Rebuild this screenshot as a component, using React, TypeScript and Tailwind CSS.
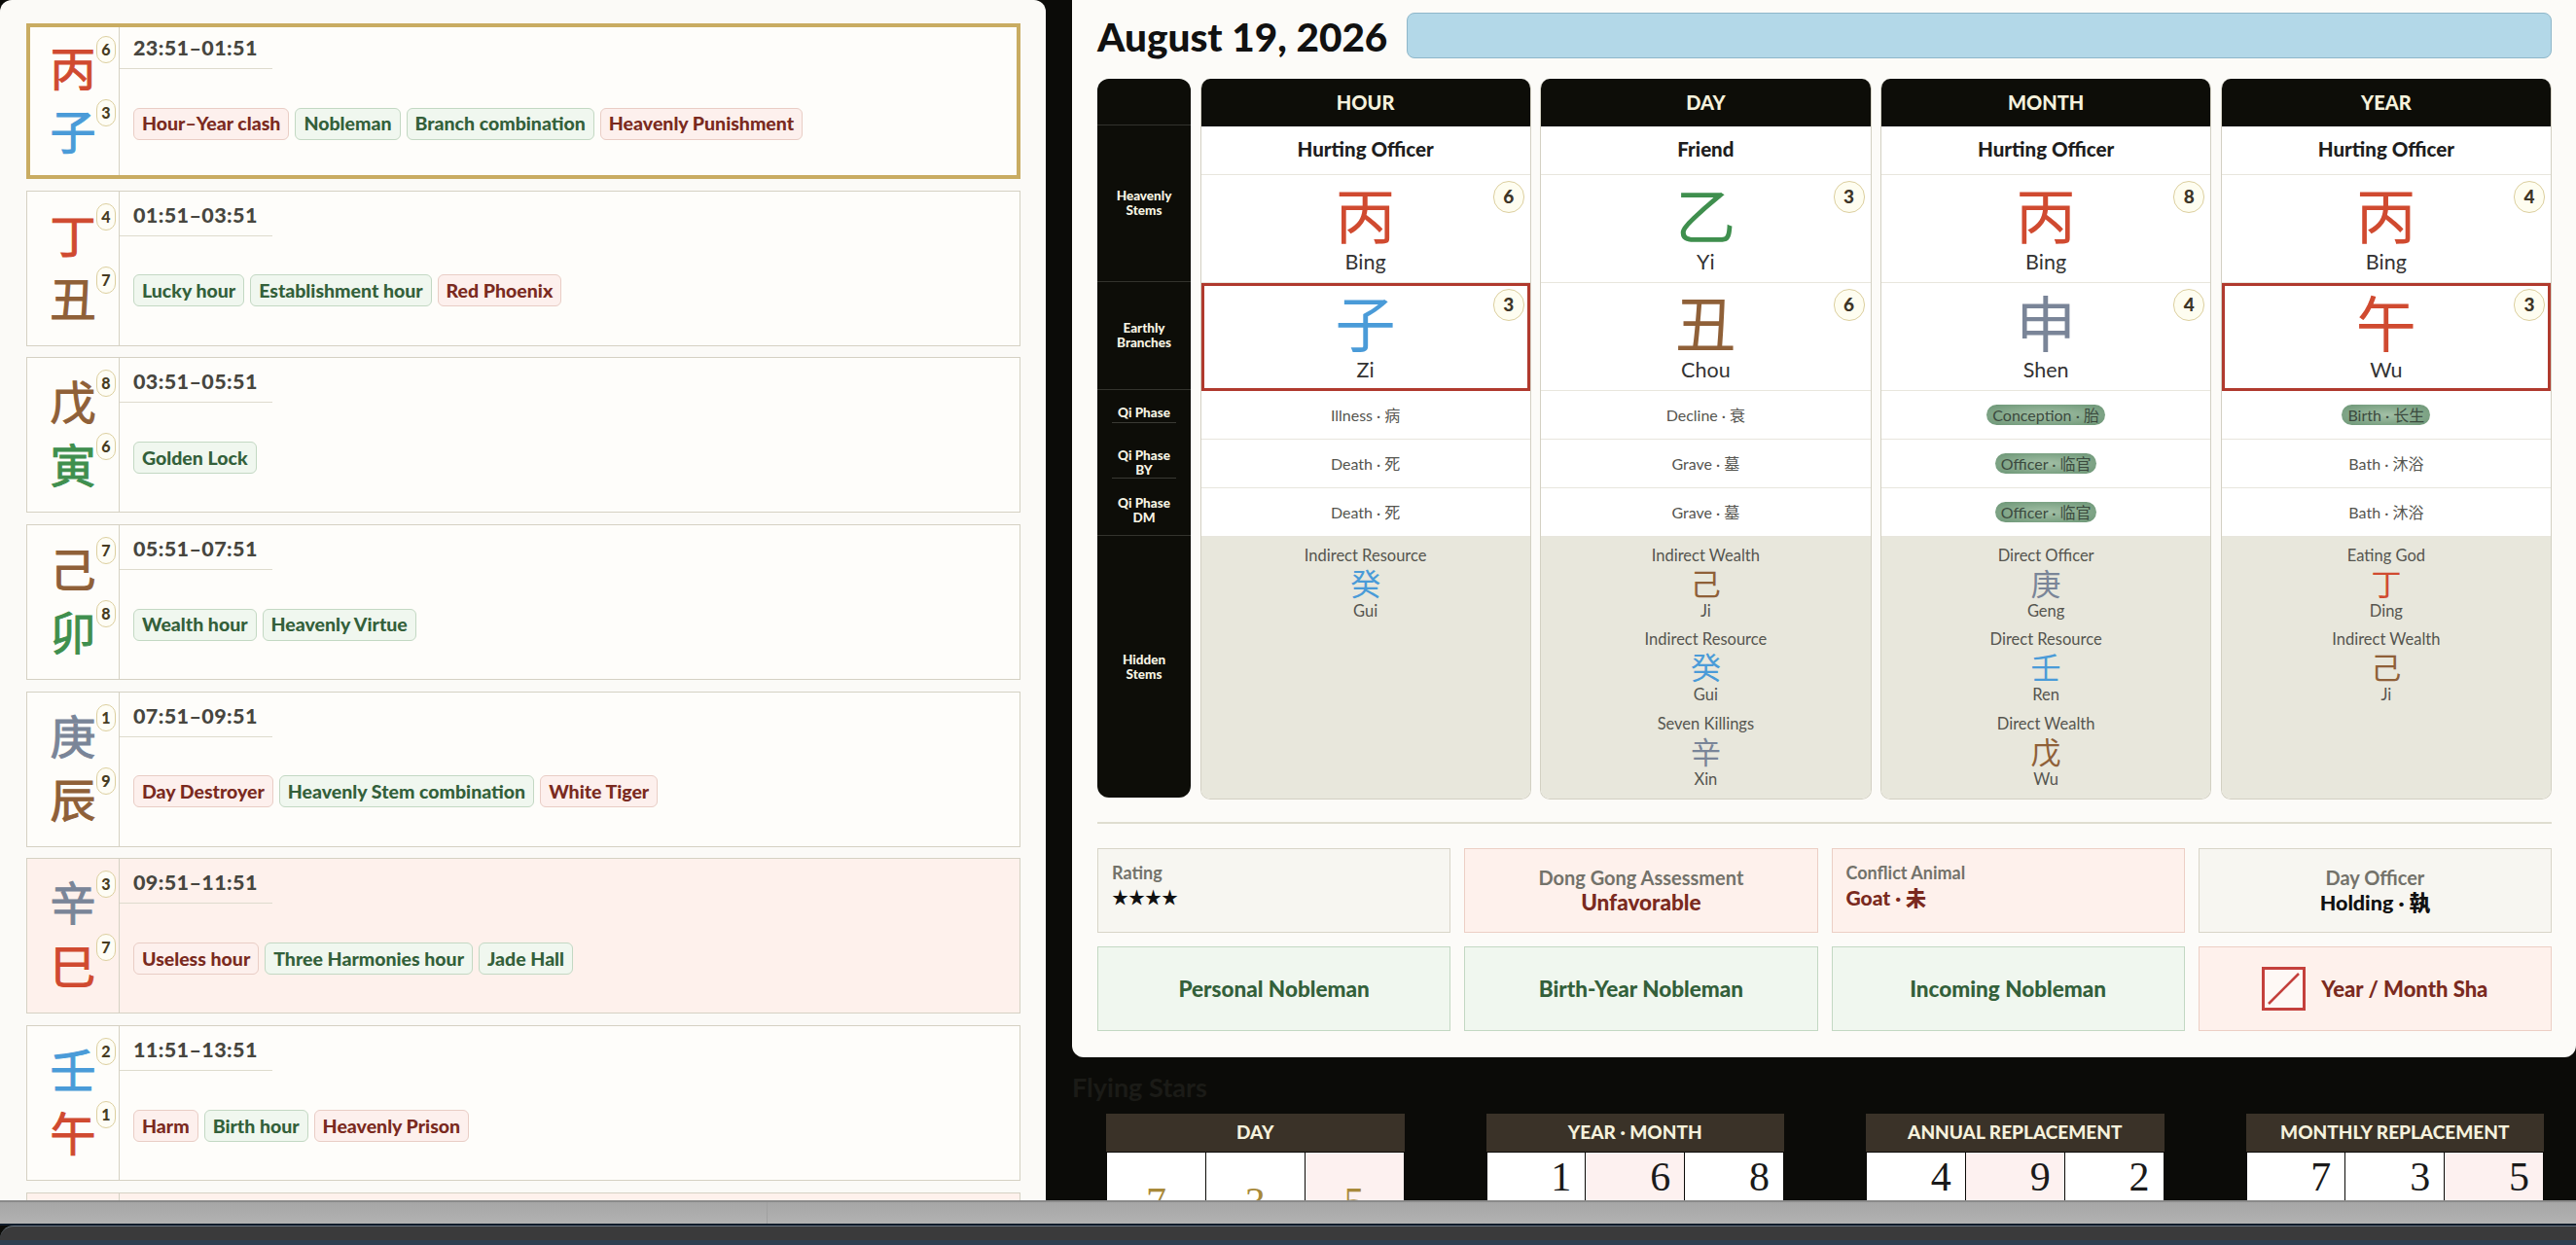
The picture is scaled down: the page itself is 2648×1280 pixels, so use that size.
import React from "react";

const RED = "text-[#d04a30]";
const BLUE = "text-[#4a9bd8]";
const BROWN = "text-[#8f6038]";
const GREEN = "text-[#3f8f4e]";
const GRAY = "text-[#7a8598]";

type Tag = [string, "r" | "g"];
type Hour = { a: [string, string, number]; b: [string, string, number]; time: string; tags: Tag[]; sel?: boolean; warm?: boolean };

const hours: Hour[] = [
  { a: ["丙", RED, 6], b: ["子", BLUE, 3], time: "23:51–01:51", sel: true, tags: [["Hour–Year clash", "r"], ["Nobleman", "g"], ["Branch combination", "g"], ["Heavenly Punishment", "r"]] },
  { a: ["丁", RED, 4], b: ["丑", BROWN, 7], time: "01:51–03:51", tags: [["Lucky hour", "g"], ["Establishment hour", "g"], ["Red Phoenix", "r"]] },
  { a: ["戊", BROWN, 8], b: ["寅", GREEN, 6], time: "03:51–05:51", tags: [["Golden Lock", "g"]] },
  { a: ["己", BROWN, 7], b: ["卯", GREEN, 8], time: "05:51–07:51", tags: [["Wealth hour", "g"], ["Heavenly Virtue", "g"]] },
  { a: ["庚", GRAY, 1], b: ["辰", BROWN, 9], time: "07:51–09:51", tags: [["Day Destroyer", "r"], ["Heavenly Stem combination", "g"], ["White Tiger", "r"]] },
  { a: ["辛", GRAY, 3], b: ["巳", RED, 7], time: "09:51–11:51", warm: true, tags: [["Useless hour", "r"], ["Three Harmonies hour", "g"], ["Jade Hall", "g"]] },
  { a: ["壬", BLUE, 2], b: ["午", RED, 1], time: "11:51–13:51", tags: [["Harm", "r"], ["Birth hour", "g"], ["Heavenly Prison", "r"]] },
];

function StemCell({ v }: { v: [string, string, number] }) {
  return (
    <div className={`relative h-[65px] flex items-center justify-center text-[47px] leading-none font-normal [-webkit-text-stroke:1px_currentColor] ${v[1]}`}>
      <span className="-mt-[2px]">{v[0]}</span>
      <span className="absolute top-[-2px] right-[3px] w-[20px] h-[28px] rounded-full border border-[#dccf9f] bg-[#fefdf5] flex items-center justify-center text-[16px] font-black text-[#463c22] [-webkit-text-stroke:0]">
        {v[2]}
      </span>
    </div>
  );
}

function HourRow({ h }: { h: Hour }) {
  const bg = h.warm ? "bg-[#fef1ec]" : "bg-[#fefdfa]";
  const ring = h.sel ? "outline-4 -outline-offset-4 outline-[#c9ac62]" : "";
  return (
    <div className={`flex h-[160px] shrink-0 border-[1.5px] border-[#d5d1c3] ${bg} ${ring}`}>
      <div className="w-[95px] shrink-0 border-r-[1.5px] border-[#d5d1c3] flex flex-col justify-center">
        <StemCell v={h.a} />
        <StemCell v={h.b} />
      </div>
      <div className="flex-1 flex flex-col">
        <div className="self-start h-[46px] pl-[14px] pr-[15px] pt-[12px] border-b border-[#dedbcd] text-[21.5px] leading-[24px] tracking-[0.4px] font-black text-[#47463f]">
          {h.time}
        </div>
        <div className="flex-1 flex items-center gap-[6px] pl-[14px]">
          {h.tags.map(([t, k]) => (
            <span
              key={t}
              className={`h-[33px] px-[8px] flex items-center rounded-[6px] border text-[19.5px] font-black ${
                k === "r" ? "bg-[#fdf0ed] border-[#e9cdc5] text-[#7a2a20]" : "bg-[#f0f7ef] border-[#c3d8c3] text-[#33603a]"
              }`}
            >
              {t}
            </span>
          ))}
        </div>
      </div>
    </div>
  );
}

type Hid = [string, string, string, string];
type Pillar = {
  title: string; god: string;
  stem: [string, string, string, number];
  branch: [string, string, string, number];
  hl?: boolean;
  qi: [string, boolean][];
  hidden: Hid[];
};

const pillars: Pillar[] = [
  { title: "HOUR", god: "Hurting Officer", stem: ["丙", RED, "Bing", 6], branch: ["子", BLUE, "Zi", 3], hl: true,
    qi: [["Illness · 病", false], ["Death · 死", false], ["Death · 死", false]],
    hidden: [["Indirect Resource", "癸", BLUE, "Gui"]] },
  { title: "DAY", god: "Friend", stem: ["乙", GREEN, "Yi", 3], branch: ["丑", BROWN, "Chou", 6],
    qi: [["Decline · 衰", false], ["Grave · 墓", false], ["Grave · 墓", false]],
    hidden: [["Indirect Wealth", "己", BROWN, "Ji"], ["Indirect Resource", "癸", BLUE, "Gui"], ["Seven Killings", "辛", GRAY, "Xin"]] },
  { title: "MONTH", god: "Hurting Officer", stem: ["丙", RED, "Bing", 8], branch: ["申", GRAY, "Shen", 4],
    qi: [["Conception · 胎", true], ["Officer · 临官", true], ["Officer · 临官", true]],
    hidden: [["Direct Officer", "庚", GRAY, "Geng"], ["Direct Resource", "壬", BLUE, "Ren"], ["Direct Wealth", "戊", BROWN, "Wu"]] },
  { title: "YEAR", god: "Hurting Officer", stem: ["丙", RED, "Bing", 4], branch: ["午", RED, "Wu", 3], hl: true,
    qi: [["Birth · 长生", true], ["Bath · 沐浴", false], ["Bath · 沐浴", false]],
    hidden: [["Eating God", "丁", RED, "Ding"], ["Indirect Wealth", "己", BROWN, "Ji"]] },
];

function BigCell({ v, hl }: { v: [string, string, string, number]; hl?: boolean }) {
  return (
    <div className={`relative h-[111px] flex flex-col items-center ${hl ? "pt-[5px] border-[3px] border-[#b03a2e]" : "pt-[8px] border-b border-[#e8e6dd]"}`}>
      <span className={`text-[62px] leading-[69px] ${v[1]}`}>{v[0]}</span>
      <span className="text-[21.5px] leading-[24px] text-[#333]">{v[2]}</span>
      <span className={`absolute ${hl ? "top-[3px] right-[3px]" : "top-[6px] right-[6px]"} w-[32px] h-[33px] rounded-full border border-[#dccf9f] bg-[#fefdf0] flex items-center justify-center text-[19px] font-black text-[#3d3527]`}>
        {v[3]}
      </span>
    </div>
  );
}

function PillarCol({ p }: { p: Pillar }) {
  return (
    <div className="flex flex-col rounded-[10px] overflow-hidden border-x-[1.5px] border-b-[1.5px] border-[#d3d0c3] bg-white">
      <div className="h-[49px] -mx-[1.5px] pb-[2px] bg-[#0d0d08] flex items-center justify-center text-[20px] font-black text-[#f5f1dc]">{p.title}</div>
      <div className="h-[50px] pb-[2px] flex items-center justify-center text-[20.5px] font-black text-[#1e1e1e] border-b border-[#e8e6dd]">{p.god}</div>
      <BigCell v={p.stem} />
      <BigCell v={p.branch} hl={p.hl} />
      {p.qi.map(([t, on], i) => (
        <div key={i} className="h-[50px] flex items-center justify-center text-[16px] text-[#55554f] border-b border-[#e8e6dd] last:border-b-0">
          {on ? (
            <span className="h-[21px] px-[6px] rounded-full flex items-center bg-[radial-gradient(ellipse_at_center,#a3c0a6,#6b9575)] text-[#3b4a3e]">{t}</span>
          ) : t}
        </div>
      ))}
      <div className="flex-1 bg-[#e8e7dc] pt-[8px] flex flex-col items-center">
        {p.hidden.map(([l, c, col, n]) => (
          <div key={l} className="h-[86.3px] flex flex-col items-center">
            <span className="text-[16.5px] leading-[22px] text-[#55554f]">{l}</span>
            <span className={`text-[31px] leading-[36px] ${col}`}>{c}</span>
            <span className="text-[16.5px] leading-[20px] text-[#55554f]">{n}</span>
          </div>
        ))}
      </div>
    </div>
  );
}

const sideText = "flex justify-center text-center text-[13.5px] leading-[15px] font-black text-[#f7f4e4]";

function Card({ tone, left, label, value, valueCls }: { tone: "n" | "r"; left?: boolean; label: string; value: string; valueCls: string }) {
  const c = tone === "r" ? "bg-[#fef1ec] border-[#eccfc5]" : "bg-[#f7f6f1] border-[#d8d5c8]";
  return (
    <div className={`h-[87px] border-[1.5px] ${c} flex flex-col justify-center ${left ? "items-start pl-[14px] pb-[12px]" : "items-center pb-[2px]"}`}>
      <span className={`${left ? "text-[18px]" : "text-[20px]"} leading-[26px] font-bold text-[#73726a]`}>{label}</span>
      <span className={`leading-[26px] font-black ${valueCls}`}>{value}</span>
    </div>
  );
}

function Noble({ t }: { t: string }) {
  return <div className="h-[87px] border-[1.5px] bg-[#f0f7ef] border-[#c3d8c3] flex items-center justify-center text-[22.5px] font-black text-[#33603a]">{t}</div>;
}

const stars: { title: string; cells: [number, boolean][]; gold?: boolean }[] = [
  { title: "DAY", gold: true, cells: [[7, false], [3, false], [5, true]] },
  { title: "YEAR · MONTH", cells: [[1, false], [6, true], [8, false]] },
  { title: "ANNUAL REPLACEMENT", cells: [[4, false], [9, true], [2, false]] },
  { title: "MONTHLY REPLACEMENT", cells: [[7, false], [3, false], [5, true]] },
];

export default function App() {
  return (
    <div className="w-[2648px] h-[1280px] overflow-hidden flex flex-col bg-[#0b0b08] font-[Lato,'Noto_Sans_CJK_SC',sans-serif]">
      <div className="h-[1234px] flex gap-[27px] overflow-hidden shrink-0">
        <div className="w-[1075px] shrink-0 h-full overflow-hidden rounded-t-[12px] bg-[#fbfaf7] pt-[24px] pl-[27px] pr-[26px] flex flex-col gap-[11.7px]">
          {hours.map((h) => <HourRow key={h.time} h={h} />)}
          <div className="flex h-[160px] shrink-0 border-[1.5px] border-[#d5d1c3] bg-[#fef1ec]">
            <div className="w-[95px] shrink-0 border-r-[1.5px] border-[#d5d1c3]" />
          </div>
        </div>
        <div className="flex-1 flex flex-col min-w-0">
          <div className="h-[1087px] shrink-0 bg-[#fcfbf8] rounded-b-[12px] pl-[26px] pr-[25px] flex flex-col">
            <div className="h-[81px] shrink-0 flex items-start gap-[20px]">
              <h1 className="mt-[13px] text-[40.5px] leading-[50px] font-black text-[#111]">August 19, 2026</h1>
              <div className="mt-[13px] flex-1 h-[47px] rounded-[8px] border-[1.5px] border-[#8fb7ca] bg-[#b3d8e8]" />
            </div>
            <div className="h-[741px] shrink-0 grid grid-cols-[96px_repeat(4,1fr)] gap-x-[9.5px]">
              <div className="h-[739px] rounded-[12px] bg-[#0d0d08] flex flex-col">
                <div className="h-[48px] border-b border-[#33332d]" />
                <div className={`h-[161px] items-center border-b border-[#33332d] ${sideText}`}>Heavenly<br />Stems</div>
                <div className={`h-[111px] items-center border-b border-[#33332d] ${sideText}`}>Earthly<br />Branches</div>
                <div className={`h-[34px] pt-[16px] w-[66px] mx-auto border-b border-[#3a3a34] ${sideText}`}>Qi Phase</div>
                <div className={`h-[57px] pt-[26px] w-[66px] mx-auto border-b border-[#3a3a34] ${sideText}`}>Qi Phase<br />BY</div>
                <div className={`h-[59px] pt-[18px] border-b border-[#33332d] ${sideText}`}>Qi Phase<br />DM</div>
                <div className={`flex-1 items-center ${sideText}`}>Hidden<br />Stems</div>
              </div>
              {pillars.map((p) => <PillarCol key={p.title} p={p} />)}
            </div>
            <div className="mt-[23px] h-[2px] bg-[#dfddd0] shrink-0" />
            <div className="mt-[25px] grid grid-cols-4 gap-x-[14px] gap-y-[14px]">
              <Card tone="n" left label="Rating" value="★★★★" valueCls="text-[17px] text-[#111]" />
              <Card tone="r" label="Dong Gong Assessment" value="Unfavorable" valueCls="text-[22.5px] text-[#7a2a20]" />
              <Card tone="r" left label="Conflict Animal" value="Goat · 未" valueCls="text-[21px] text-[#7a2a20]" />
              <Card tone="n" label="Day Officer" value="Holding · 執" valueCls="text-[21.5px] text-[#111]" />
              <Noble t="Personal Nobleman" />
              <Noble t="Birth-Year Nobleman" />
              <Noble t="Incoming Nobleman" />
              <div className="h-[87px] border-[1.5px] bg-[#fef1ec] border-[#eccfc5] flex items-center justify-center gap-[16px] text-[22px] font-black text-[#7a2a20]">
                <svg width="45" height="45" viewBox="0 0 45 45" className="shrink-0">
                  <rect x="1.5" y="1.5" width="42" height="42" fill="#fef8f5" stroke="#c4403c" strokeWidth="3" />
                  <line x1="7" y1="38" x2="38" y2="7" stroke="#c4403c" strokeWidth="2.5" />
                </svg>
                Year / Month Sha
              </div>
            </div>
          </div>
          <div className="flex-1 overflow-hidden">
            <div className="mt-[15px] h-[43px] text-[27px] leading-[32px] font-bold text-[#1b1b17]">Flying Stars</div>
            <div className="grid grid-cols-4 gap-x-[84px] pl-[35px] pr-[33px]">
              {stars.map((s) => (
                <div key={s.title}>
                  <div className="h-[40px] bg-[#3a3228] flex items-center justify-center text-[19px] font-black text-[#f5f1dc] border-b border-[#0b0b08]">{s.title}</div>
                  <div className="grid grid-cols-3 gap-x-px px-px">
                    {s.cells.map(([n, pink], i) => (
                      <div
                        key={i}
                        className={`h-[80px] font-['Liberation_Serif',serif] text-[42px] leading-[50px] ${pink ? "bg-[#fdf1f0]" : "bg-white"} ${
                          s.gold ? "text-center pt-[26px] text-[#a8893a]" : "text-right pr-[14px] text-[#1a1a1a]"
                        }`}
                      >
                        {n}
                      </div>
                    ))}
                  </div>
                </div>
              ))}
            </div>
          </div>
        </div>
      </div>
      <div className="h-[24px] shrink-0 border-t-2 border-[#8a8a8a] bg-[linear-gradient(#a6a6a6,#b2b2b2)] flex">
        <div className="w-[789px] border-r border-[#a0a0a0]" />
      </div>
      <div className="h-[2px] shrink-0 bg-[#101c2b]" />
      <div className="h-[20px] shrink-0 rounded-tl-[14px] border-t border-[#66727e] bg-[#3a3a3b] flex flex-col justify-end">
        <div className="h-[5px] bg-[#2e3f50]" />
      </div>
    </div>
  );
}
